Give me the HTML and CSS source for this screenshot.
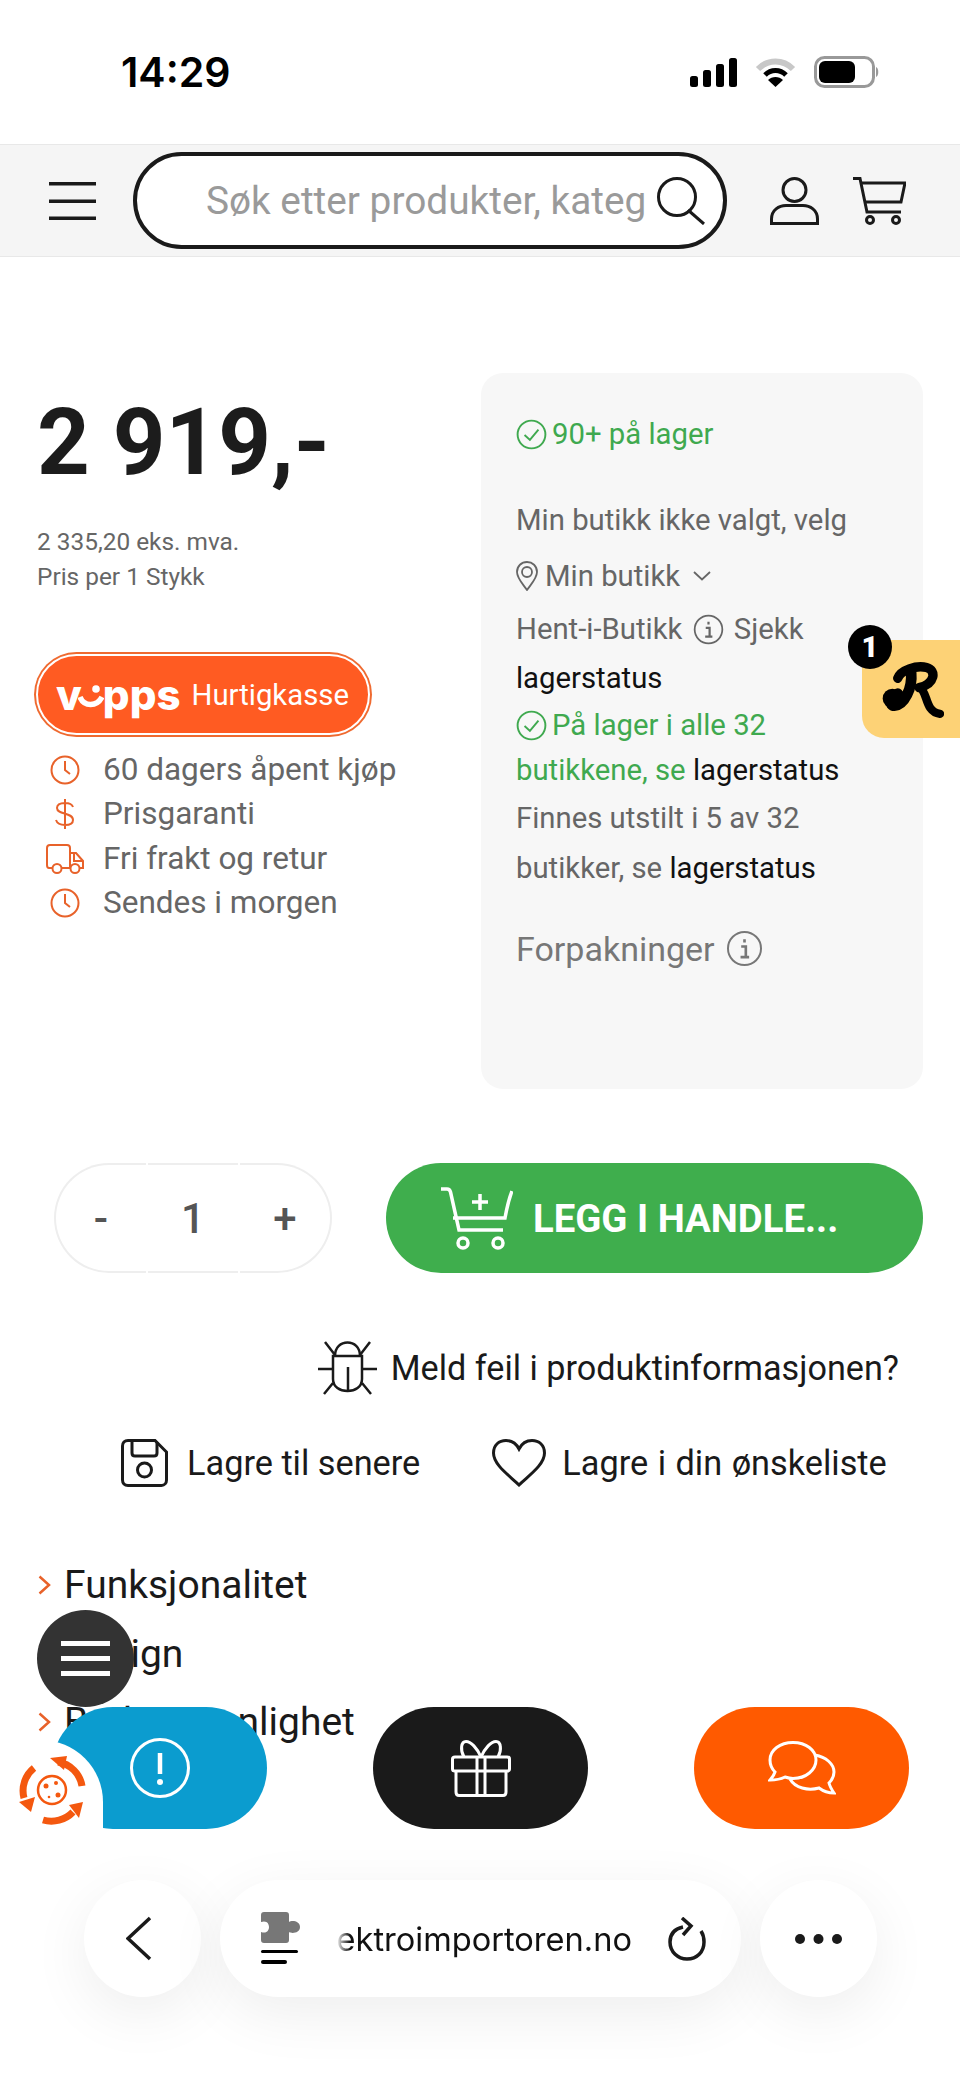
FILE: index.html
```html
<!DOCTYPE html>
<html>
<head>
    <meta charset="UTF-8">
    <meta name="viewport" content="width=device-width, initial-scale=1.0">
    <title>Elektroimportoren</title>
    <link rel="stylesheet" href="styles.css">
</head>
<body>
<div class="page">
    <div class="status-bar">
        <span class="time">14:29</span>
        <div class="status-icons">
            <svg width="47" height="29" viewBox="0 0 47 29"><rect x="0" y="18" width="8" height="11" rx="2.5"/><rect x="13" y="12" width="8" height="17" rx="2.5"/><rect x="26" y="6" width="8" height="23" rx="2.5"/><rect x="39" y="0" width="8" height="29" rx="2.5"/></svg>
            <svg width="41" height="29" viewBox="0 0 41 29" fill="none"><path d="M3 11C13 1 28 1 38 11" stroke="#c8c8c8" stroke-width="6"/><path d="M10 17C16 11 25 11 31 17" stroke="#000" stroke-width="5"/><path d="M20.5 29L13 22C17 18 24 18 28 22Z" fill="#000"/></svg>
            <svg width="66" height="32" viewBox="0 0 66 32" fill="none"><rect x="1.5" y="1.5" width="58" height="29" rx="9" stroke="#999" stroke-width="3"/><rect x="5" y="5" width="36" height="22" rx="6" fill="#000"/><path d="M62 11C65 12 65 20 62 21Z" fill="#999"/></svg>
        </div>
    </div>

    <header class="top-bar">
        <svg class="menu-icon" width="47" height="38" viewBox="0 0 47 38"><rect y="0" width="47" height="3.5"/><rect y="17.5" width="47" height="3.5"/><rect y="34.5" width="47" height="3.5"/></svg>
        <div class="search">
            <span class="search-text">Søk etter produkter, kateg</span>
            <svg width="48" height="48" viewBox="0 0 48 48" fill="none" stroke="#1a1a1a" stroke-width="3"><circle cx="20" cy="20" r="18.5"/><path d="M31 33L47 47"/></svg>
        </div>
        <svg class="user-icon" width="49" height="48" viewBox="0 0 49 48" fill="none" stroke="#1a1a1a" stroke-width="3"><circle cx="24.5" cy="13" r="11.5"/><path d="M1.5 46.5V42C1.5 33 9 28.5 16 28.5H33C40 28.5 47.5 33 47.5 42V46.5Z"/></svg>
        <svg class="cart-icon" width="53" height="48" viewBox="0 0 53 48" fill="none" stroke="#1a1a1a" stroke-width="3"><path d="M0 1.5H7L14 35H48"/><path d="M8 6H52L48 25H12"/><circle cx="17" cy="43" r="3.5"/><circle cx="43" cy="43" r="3.5"/></svg>
    </header>

    <main>
        <div class="summary">
            <div class="price-col">
                <div class="price">2 919,-</div>
                <div class="price-sub">2 335,20 eks. mva.<br>Pris per 1 Stykk</div>
                <div class="vopps">
                    <span class="vopps-logo">v<svg width="26" height="30" viewBox="0 0 26 30" fill="none"><circle cx="18" cy="7" r="3.8" fill="#fff"/><path d="M2 15C6 25 19 25 24 15" stroke="#fff" stroke-width="5.5"/></svg>pps</span>
                    <span class="vopps-text">Hurtigkasse</span>
                </div>
                <ul class="perks">
                    <li>
                        <span class="perk-icon"><svg width="30" height="30" viewBox="0 0 30 30" fill="none" stroke="#e8622a" stroke-width="2"><circle cx="15" cy="15" r="13.5"/><path d="M15 6V15L20 19"/></svg></span>
                        60 dagers åpent kjøp
                    </li>
                    <li>
                        <span class="perk-icon"><svg width="20" height="32" viewBox="0 0 20 32" fill="none" stroke="#e8622a" stroke-width="2"><path d="M18 9C17 6 14 5 10 5C5 5 2 7 2 10C2 17 18 14 18 22C18 25 15 27 10 27C5 27 2 25 1 22M10 1V31"/></svg></span>
                        Prisgaranti
                    </li>
                    <li>
                        <span class="perk-icon"><svg width="38" height="30" viewBox="0 0 38 30" fill="none" stroke="#e8622a" stroke-width="2"><path d="M7 24H3C2 24 1 23 1 21V4C1 2 2 1 4 1H21C23 1 24 2 24 4V24H15"/><path d="M24 9H30L37 17V24H33M24 24H25"/><path d="M28 10V17H36"/><circle cx="11" cy="24.500" r="4.500"/><circle cx="29" cy="24.500" r="4.500"/></svg></span>
                        Fri frakt og retur
                    </li>
                    <li>
                        <span class="perk-icon"><svg width="30" height="30" viewBox="0 0 30 30" fill="none" stroke="#e8622a" stroke-width="2"><circle cx="15" cy="15" r="13.5"/><path d="M15 6V15L20 19"/></svg></span>
                        Sendes i morgen
                    </li>
                </ul>
            </div>

            <div class="stock">
                <p class="stock-first green"><svg class="check" width="31" height="31" viewBox="0 0 29 29" fill="none" stroke="#3fa94f" stroke-width="1.800"><circle cx="14.500" cy="14.500" r="13"/><path d="M8 15L13 19.500L21 10"/></svg>90+ på lager</p>
                <p class="stock-store">Min butikk ikke valgt, velg</p>
                <p class="stock-pick"><svg width="22" height="30" viewBox="0 0 22 30" fill="none" stroke="#666" stroke-width="1.800"><path d="M11 29C6 22 1 17 1 11C1 5 5.500 1 11 1C16.500 1 21 5 21 11C21 17 16 22 11 29Z"/><circle cx="11" cy="11" r="5"/></svg>Min butikk<svg class="caret" width="18" height="10" viewBox="0 0 18 10" fill="none" stroke="#666" stroke-width="1.800"><path d="M1 1L9 8.500L17 1"/></svg></p>
                <p class="stock-pickup">Hent-i-Butikk <svg class="info" width="31" height="31" viewBox="0 0 28 28" fill="none"><circle cx="14" cy="14" r="12.500" stroke="#666" stroke-width="1.600"/><path d="M11.500 12.500H15V20M11 20.500H17.500M14 7V9.500" stroke="#666" stroke-width="2"/></svg> Sjekk <a>lagerstatus</a></p>
                <p class="stock-all green"><svg class="check" width="31" height="31" viewBox="0 0 29 29" fill="none" stroke="#3fa94f" stroke-width="1.800"><circle cx="14.500" cy="14.500" r="13"/><path d="M8 15L13 19.500L21 10"/></svg>På lager i alle 32 butikkene, se <a>lagerstatus</a></p>
                <p class="stock-shown">Finnes utstilt i 5 av 32 butikker, se <a>lagerstatus</a></p>
                <p class="stock-pack">Forpakninger <svg class="info" width="37" height="37" viewBox="0 0 28 28" fill="none"><circle cx="14" cy="14" r="12.500" stroke="#777" stroke-width="1.500"/><path d="M11.500 12.500H15V20M11 20.500H17.500M14 7V9.500" stroke="#777" stroke-width="2"/></svg></p>
            </div>
        </div>

        <div class="buy-row">
            <div class="qty">
                <span class="qty-cell qty-left">-</span>
                <span class="qty-cell">1</span>
                <span class="qty-cell qty-right">+</span>
            </div>
            <button class="add-btn">
                <svg width="72" height="63" viewBox="0 0 72 63" fill="none" stroke="#fff" stroke-width="3.500"><path d="M0 2H6C8 2 9 3 9.500 5L18 43H62"/><path d="M12 31H64C66 20 68 12 71 4"/><path d="M39 7V23M31 15H47"/><circle cx="22" cy="56" r="5"/><circle cx="57" cy="56" r="5"/></svg>
                <span>LEGG I HANDLE...</span>
            </button>
        </div>

        <div class="report-row">
            <svg width="59" height="54" viewBox="0 0 59 54" fill="none" stroke="#1a1a1a" stroke-width="2.500"><path d="M17 15C17 6 23 1.500 29.500 1.500C36 1.500 42 6 42 15"/><path d="M15 15H44V38C44 46 37 50 29.500 50C22 50 15 46 15 38Z"/><path d="M30 26V50M7 1L17 14M52 1L42 14M0 28H15M44 28H59M15 42L6 53M44 42L53 53"/></svg>
            <span>Meld feil i produktinformasjonen?</span>
        </div>

        <div class="save-row">
            <svg width="47" height="48" viewBox="0 0 47 48" fill="none" stroke="#1a1a1a" stroke-width="3"><path d="M7 1.500H34L45.500 13V41C45.500 44 43.500 46.500 40.500 46.500H7C3.500 46.500 1.500 44 1.500 41V7C1.500 4 3.500 1.500 7 1.500Z"/><path d="M11 2V14C11 16 12 17 14 17H33C35 17 36 16 36 14V3"/><circle cx="23.500" cy="31" r="7"/></svg>
            <span>Lagre til senere</span>
            <svg class="heart" width="54" height="48" viewBox="0 0 54 48" fill="none" stroke="#1a1a1a" stroke-width="3"><path d="M27 46C18 37 1.500 26 1.500 14C1.500 6 7 1.500 14 1.500C20 1.500 24.500 5 27 10C29.500 5 34 1.500 40 1.500C47 1.500 52.500 6 52.500 14C52.500 26 36 37 27 46Z"/></svg>
            <span class="wish-label">Lagre i din ønskeliste</span>
        </div>

        <ul class="specs">
            <li><svg width="13" height="20" viewBox="0 0 13 20" fill="none" stroke="#e8622a" stroke-width="2.500"><path d="M1.500 1.500L11 10L1.500 18.500"/></svg>Funksjonalitet</li>
            <li><svg width="13" height="20" viewBox="0 0 13 20" fill="none" stroke="#e8622a" stroke-width="2.500"><path d="M1.500 1.500L11 10L1.500 18.500"/></svg>Design</li>
            <li><svg width="13" height="20" viewBox="0 0 13 20" fill="none" stroke="#e8622a" stroke-width="2.500"><path d="M1.500 1.500L11 10L1.500 18.500"/></svg>Brukervennlighet</li>
        </ul>
    </main>

    <!-- floating stuff on top of the page -->
    <div class="reviews-tab">
        <span class="reviews-count">1</span>
        <svg class="reviews-logo" width="62" height="58" viewBox="125 125 185 172" fill="none" stroke="#000" stroke-linecap="round">
            <path d="M172 176C180 152 228 136 258 144C288 152 284 192 236 204" stroke-width="28"/>
            <path d="M212 160C216 205 192 256 162 258C146 258 146 232 172 222" stroke-width="32"/>
            <path d="M238 204C262 216 252 276 298 282" stroke-width="25"/>
            <circle cx="156" cy="236" r="29" fill="#000" stroke="none"/>
        </svg>
    </div>

    <div class="round-menu">
        <svg width="49" height="35" viewBox="0 0 49 35" fill="#fff"><rect y="0" width="49" height="5"/><rect y="15" width="49" height="5"/><rect y="30" width="49" height="5"/></svg>
    </div>

    <div class="fabs">
        <div class="fab fab-blue"><svg width="60" height="60" viewBox="0 0 60 60" fill="none" stroke="#fff" stroke-width="3"><circle cx="30" cy="30" r="28.500"/><path d="M30 15V36" stroke-width="4.500"/><circle cx="30" cy="44" r="3" fill="#fff" stroke="none"/></svg></div>
        <div class="fab fab-black"><svg width="60" height="57" viewBox="0 0 60 57" fill="none" stroke="#fff" stroke-width="3"><path d="M4 17H56C58 17 58.500 18 58.500 19V29C58.500 30 58 31 56 31H4C2 31 1.500 30 1.500 29V19C1.500 18 2 17 4 17Z"/><path d="M5 31V52C5 54 6 55.500 8 55.500H52C54 55.500 55 54 55 52V31"/><path d="M26 17V55M34 17V55"/><path d="M30 17C26 8 20 1.500 15 1.500C10 1.500 9 10 13 17M30 17C34 8 40 1.500 45 1.500C50 1.500 51 10 47 17"/></svg></div>
        <div class="fab fab-orange"><svg width="68" height="54" viewBox="0 0 68 54" fill="none" stroke="#fff" stroke-width="3"><path d="M25 1.500C12 1.500 2 9 2 19C2 24 4 28 7 31C6 34 4 37 2 39C8 39 13 38 17 36C20 37 22 37.500 25 37.500C38 37.500 48 29 48 19C48 9 38 1.500 25 1.500Z"/><path d="M47 14C58 16 66 23 66 31C66 35 64 39 61 42C62 46 64 49 66 52C60 52 55 50 51 47C40 50 27 47 22 38"/></svg></div>
    </div>

    <div class="cookie-tab">
        <svg width="70" height="70" viewBox="-35 -35 70 70" fill="none" stroke="#f4580f" stroke-width="7"><path d="M6 -28A29 29 0 0 1 30 -4"/><path d="M-18 -22A29 29 0 0 0 -28 8"/><path d="M-9 30A30 30 0 0 0 21 22"/><g fill="#f4580f" stroke="none"><path d="M-2 -32L15 -34L12 -20Z"/><path d="M-33 12L-17 7L-21 22Z"/><path d="M31 12L17 15L27 28Z"/></g><circle r="14" stroke-width="2.500"/><g fill="#f4580f" stroke="none"><circle cx="-6" cy="-4" r="2.500"/><circle cx="4" cy="-7" r="2"/><circle cx="6" cy="5" r="2.500"/><circle cx="-3" cy="7" r="1.300"/></g></svg>
    </div>

    <div class="browser-bar">
        <div class="pill pill-round">
            <svg class="back-icon" width="26" height="45" viewBox="0 0 26 45" fill="none" stroke="#1a1a1a" stroke-width="3.500"><path d="M24 2L2 22.500L24 43"/></svg>
        </div>
        <div class="pill pill-url">
            <div class="site-icon">
                <svg width="39" height="31" viewBox="0 0 39 31" fill="#777"><path d="M3 0H25C27 0 28 1 28 3V10C31 8 39 9 39 15C39 21 31 22 28 20V28C28 30 27 31 25 31H3C1 31 0 30 0 28V20C6 22 8 18 8 15C8 12 6 8 0 10V3C0 1 1 0 3 0Z"/></svg>
                <span class="site-line"></span>
                <span class="site-line site-line-short"></span>
            </div>
            <div class="url"><span>lektroimportoren.no</span></div>
            <svg class="reload" width="38" height="44" viewBox="0 0 38 44" fill="none" stroke="#1a1a1a" stroke-width="3.500"><path d="M15 10C6 12 2 18 2 25C2 35 10 42 19 42C29 42 36 35 36 25C36 21 35 17 33 14"/><path d="M14 1L23 9L15 18"/></svg>
        </div>
        <div class="pill pill-round">
            <svg width="47" height="10" viewBox="0 0 47 10" fill="#1a1a1a"><circle cx="5" cy="5" r="5"/><circle cx="23.500" cy="5" r="5"/><circle cx="42" cy="5" r="5"/></svg>
        </div>
    </div>
</div>
</body>
</html>
```

FILE: styles.css
```css
* {
    box-sizing: border-box;
}

body {
    margin: 0;
    background: #fff;
    font-family: Roboto, Arial, sans-serif;
    color: #1a1a1a;
}

svg {
    display: block;
    flex-shrink: 0;
}

.page {
    position: relative;
    width: 960px;
    height: 2081px;
    overflow: hidden;
}

/* status bar */
.status-bar {
    height: 144px;
    padding: 0 80px 0 121px;
    display: flex;
    align-items: center;
    justify-content: space-between;
}

.time {
    font-family: Inter, sans-serif;
    font-size: 41px;
    font-weight: 600;
    color: #000;
}

.status-icons {
    display: flex;
    align-items: center;
    gap: 18px;
}

/* header */
.top-bar {
    height: 113px;
    padding-left: 49px;
    display: flex;
    align-items: center;
    background: #f5f5f5;
    border-top: 1px solid #e8e8e8;
    border-bottom: 1px solid #e8e8e8;
}

.menu-icon {
    fill: #1a1a1a;
    margin-right: 37px;
}

.search {
    width: 594px;
    height: 97px;
    padding-left: 69px;
    display: flex;
    align-items: center;
    gap: 11px;
    background: #fff;
    border: 4px solid #1a1a1a;
    border-radius: 49px;
}

.search-text {
    width: 440px;
    overflow: hidden;
    white-space: nowrap;
    font-size: 38.800px;
    color: #9a9a9a;
}

.user-icon {
    margin-left: 43px;
}

.cart-icon {
    margin-left: 34px;
}

/* price + stock */
.summary {
    padding: 116px 37px 0;
    display: flex;
    justify-content: space-between;
}

.price {
    margin-top: 30px;
    font-size: 92px;
    line-height: 80px;
    font-weight: 700;
    color: #1c1c1c;
}

.price-sub {
    margin-top: 41px;
    font-size: 24.400px;
    line-height: 35px;
    color: #666;
}

.vopps {
    width: 334px;
    height: 81px;
    margin: 60px 0 0 -1px;
    padding-left: 18px;
    display: flex;
    align-items: center;
    gap: 11px;
    background: #ff5b22;
    border: 2px solid #fff;
    border-radius: 41px;
    box-shadow: 0 0 0 2px #ef6a30;
    color: #fff;
}

.vopps-logo {
    display: flex;
    align-items: center;
    font-family: Inter, sans-serif;
    font-size: 42px;
    line-height: 50px;
    font-weight: 800;
}

.vopps-logo svg {
    margin: 4px -1px 0 -4px;
}

.vopps-text {
    font-size: 29.300px;
}

.perks {
    list-style: none;
    margin: 13px 0 0;
    padding: 0;
    font-size: 31.500px;
    line-height: 44.300px;
    color: #666;
}

.perks li {
    display: flex;
    align-items: center;
    gap: 19px;
    padding-left: 9px;
}

.perk-icon {
    width: 38px;
    display: flex;
    justify-content: center;
}

.stock {
    width: 442px;
    height: 716px;
    padding: 41px 45px 0 35px;
    background: #f7f7f7;
    border-radius: 22px;
    font-size: 29.300px;
    color: #666;
}

.stock p {
    margin: 0;
}

.stock a {
    color: #111;
}

.stock .green {
    color: #3fa94f;
}

.check {
    display: inline-block;
    margin-right: 5px;
    vertical-align: -6px;
}

.info {
    display: inline-block;
    margin: 0 3px;
    vertical-align: -6px;
}

.stock-first {
    line-height: 40px;
}

.stock .stock-store {
    margin-top: 41px;
    line-height: 50px;
}

.stock .stock-pick {
    margin-top: 6px;
    display: flex;
    align-items: center;
    gap: 7px;
    line-height: 50px;
}

.stock-pick .caret {
    margin-left: 6px;
}

.stock .stock-pickup {
    margin-top: 4px;
    line-height: 49px;
}

.stock-all {
    line-height: 45px;
}

.stock-shown {
    line-height: 50px;
}

.stock .stock-pack {
    margin-top: 31px;
    font-size: 34px;
    line-height: 50px;
    color: #777;
}

/* quantity + add to cart */
.buy-row {
    margin-top: 74px;
    padding: 0 37px 0 54px;
    display: flex;
    justify-content: space-between;
    align-items: center;
}

.qty {
    width: 278px;
    height: 110px;
    display: flex;
    gap: 2px;
    font-size: 42px;
    font-weight: 500;
    color: #555;
}

.qty-cell {
    flex: 1;
    display: flex;
    align-items: center;
    justify-content: center;
    border-top: 2px solid #eee;
    border-bottom: 2px solid #eee;
}

.qty-left {
    border-left: 2px solid #eee;
    border-radius: 55px 0 0 55px;
}

.qty-right {
    border-right: 2px solid #eee;
    border-radius: 0 55px 55px 0;
}

.add-btn {
    width: 537px;
    height: 110px;
    padding: 0 0 0 55px;
    display: flex;
    align-items: center;
    gap: 20px;
    background: #3fae4d;
    border: none;
    border-radius: 55px;
    color: #fff;
    font-family: Roboto, Arial, sans-serif;
    font-size: 38.300px;
    font-weight: 700;
}

/* links under the button */
.report-row {
    margin-top: 68px;
    padding-right: 61px;
    display: flex;
    justify-content: flex-end;
    align-items: center;
    gap: 14px;
    font-size: 34.200px;
}

.save-row {
    margin-top: 44px;
    padding-left: 121px;
    display: flex;
    align-items: center;
    gap: 19px;
    font-size: 34.300px;
}

.heart {
    margin-left: 53px;
}

.wish-label {
    margin-left: -3px;
    word-spacing: 1px;
}

.specs {
    list-style: none;
    margin: 64px 0 0;
    padding: 0 0 0 38px;
    font-size: 39px;
    line-height: 68.500px;
}

.specs li {
    display: flex;
    align-items: center;
    gap: 13px;
}

/* overlays */
.reviews-tab {
    position: absolute;
    top: 640px;
    right: 0;
    width: 98px;
    height: 98px;
    background: #fdd276;
    border-radius: 6px 0 0 22px;
}

.reviews-count {
    position: absolute;
    top: -15px;
    left: -14px;
    width: 44px;
    height: 44px;
    background: #000;
    border-radius: 50%;
    color: #fff;
    font-size: 29px;
    font-weight: 900;
    line-height: 44px;
    text-align: center;
}

.reviews-logo {
    position: absolute;
    top: 21px;
    left: 20px;
}

.round-menu {
    position: absolute;
    top: 1610px;
    left: 37px;
    width: 97px;
    height: 97px;
    display: flex;
    align-items: center;
    justify-content: center;
    background: #333;
    border-radius: 50%;
}

.fabs {
    position: absolute;
    top: 1707px;
    left: 52px;
    display: flex;
    gap: 106px;
}

.fab {
    width: 215px;
    height: 122px;
    display: flex;
    align-items: center;
    justify-content: center;
    border-radius: 61px;
}

.fab-blue {
    background: #0b9ccf;
}

.fab-black {
    background: #1a1a1a;
}

.fab-orange {
    background: #ff5a00;
}

.cookie-tab {
    position: absolute;
    top: 1740px;
    left: 0;
    width: 103px;
    height: 92px;
    padding: 15px 0 0 17px;
    background: #fff;
    border-radius: 0 62px 0 0;
}

.browser-bar {
    position: absolute;
    top: 1880px;
    left: 84px;
    display: flex;
    gap: 19px;
}

.pill {
    height: 117px;
    display: flex;
    align-items: center;
    background: #fff;
    border-radius: 59px;
    box-shadow: 0 16px 60px rgba(0, 0, 0, 0.07);
}

.pill-round {
    width: 117px;
    justify-content: center;
}

.back-icon {
    margin-right: 8px;
}

.pill-url {
    width: 521px;
    padding-left: 41px;
}

.site-icon {
    width: 39px;
    margin-top: -2px;
}

.site-line {
    display: block;
    width: 37px;
    height: 3.500px;
    margin-top: 7px;
    background: #000;
    border-radius: 2px;
}

.site-line-short {
    width: 26px;
}

.url {
    width: 296px;
    margin-left: 36px;
    display: flex;
    justify-content: flex-end;
    overflow: hidden;
    white-space: nowrap;
    font-family: Inter, sans-serif;
    font-size: 32.600px;
    color: #111;
    -webkit-mask-image: linear-gradient(to right, transparent, #000 14px);
    mask-image: linear-gradient(to right, transparent, #000 14px);
}

.reload {
    margin-left: 36px;
}
```
